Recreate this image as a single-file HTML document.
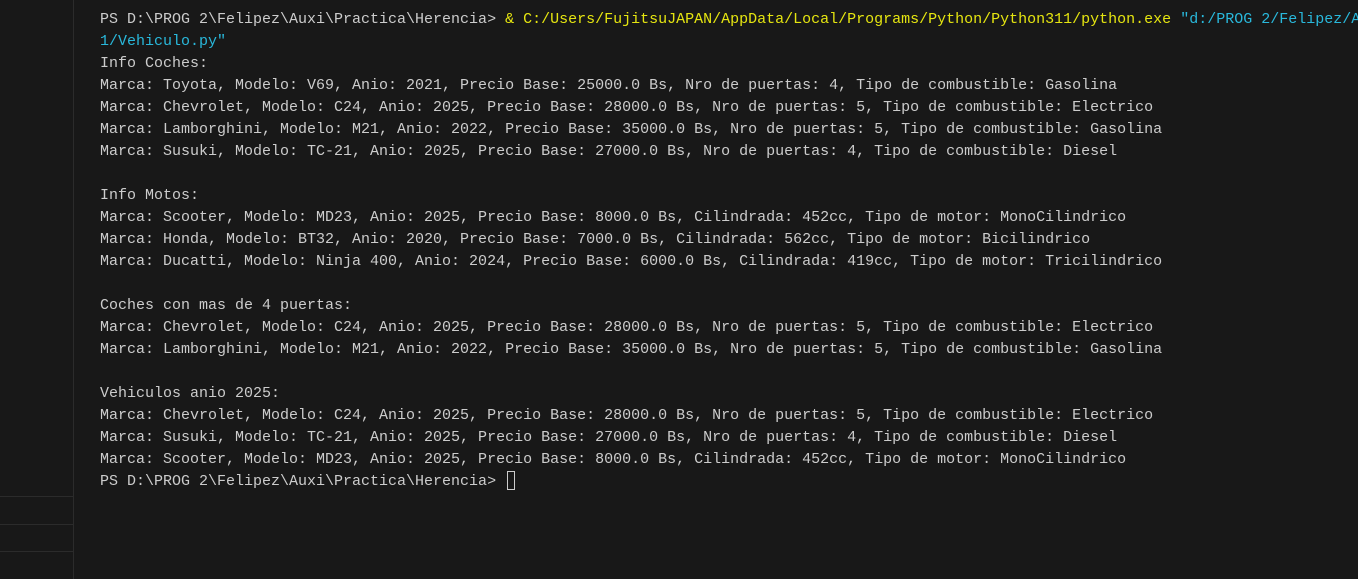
<!DOCTYPE html>
<html><head><meta charset="utf-8"><style>
html,body{margin:0;padding:0;width:1358px;height:579px;overflow:hidden;background:#181818;}
.side{position:absolute;left:0;top:0;width:73px;height:579px;border-right:1px solid #2b2b2b;background:#181818;}
.hl{position:absolute;left:0;width:73px;height:1px;background:#2b2b2b;}
.t{position:absolute;left:100px;top:9px;width:1258px;overflow:hidden;white-space:pre;font-family:"Liberation Mono","DejaVu Sans Mono",monospace;font-size:15px;letter-spacing:0px;line-height:22px;color:#cccccc;}
.y{color:#e5e510}.c{color:#29b8db}
.cur{display:inline-block;width:8px;height:19px;border:1px solid #cccccc;vertical-align:-5px;box-sizing:border-box;margin-left:2px;}
</style></head><body>
<div class="side"></div>
<div class="hl" style="top:496px"></div>
<div class="hl" style="top:524px"></div>
<div class="hl" style="top:551px"></div>
<div class="t">PS D:\PROG 2\Felipez\Auxi\Practica\Herencia&gt; <span class="y">&amp; C:/Users/FujitsuJAPAN/AppData/Local/Programs/Python/Python311/python.exe</span> <span class="c">"d:/PROG 2/Felipez/Auxi</span>
<span class="c">1/Vehiculo.py"</span>
Info Coches:
Marca: Toyota, Modelo: V69, Anio: 2021, Precio Base: 25000.0 Bs, Nro de puertas: 4, Tipo de combustible: Gasolina
Marca: Chevrolet, Modelo: C24, Anio: 2025, Precio Base: 28000.0 Bs, Nro de puertas: 5, Tipo de combustible: Electrico
Marca: Lamborghini, Modelo: M21, Anio: 2022, Precio Base: 35000.0 Bs, Nro de puertas: 5, Tipo de combustible: Gasolina
Marca: Susuki, Modelo: TC-21, Anio: 2025, Precio Base: 27000.0 Bs, Nro de puertas: 4, Tipo de combustible: Diesel

Info Motos:
Marca: Scooter, Modelo: MD23, Anio: 2025, Precio Base: 8000.0 Bs, Cilindrada: 452cc, Tipo de motor: MonoCilindrico
Marca: Honda, Modelo: BT32, Anio: 2020, Precio Base: 7000.0 Bs, Cilindrada: 562cc, Tipo de motor: Bicilindrico
Marca: Ducatti, Modelo: Ninja 400, Anio: 2024, Precio Base: 6000.0 Bs, Cilindrada: 419cc, Tipo de motor: Tricilindrico

Coches con mas de 4 puertas:
Marca: Chevrolet, Modelo: C24, Anio: 2025, Precio Base: 28000.0 Bs, Nro de puertas: 5, Tipo de combustible: Electrico
Marca: Lamborghini, Modelo: M21, Anio: 2022, Precio Base: 35000.0 Bs, Nro de puertas: 5, Tipo de combustible: Gasolina

Vehiculos anio 2025:
Marca: Chevrolet, Modelo: C24, Anio: 2025, Precio Base: 28000.0 Bs, Nro de puertas: 5, Tipo de combustible: Electrico
Marca: Susuki, Modelo: TC-21, Anio: 2025, Precio Base: 27000.0 Bs, Nro de puertas: 4, Tipo de combustible: Diesel
Marca: Scooter, Modelo: MD23, Anio: 2025, Precio Base: 8000.0 Bs, Cilindrada: 452cc, Tipo de motor: MonoCilindrico
PS D:\PROG 2\Felipez\Auxi\Practica\Herencia&gt; <span class="cur"></span></div>
</body></html>
